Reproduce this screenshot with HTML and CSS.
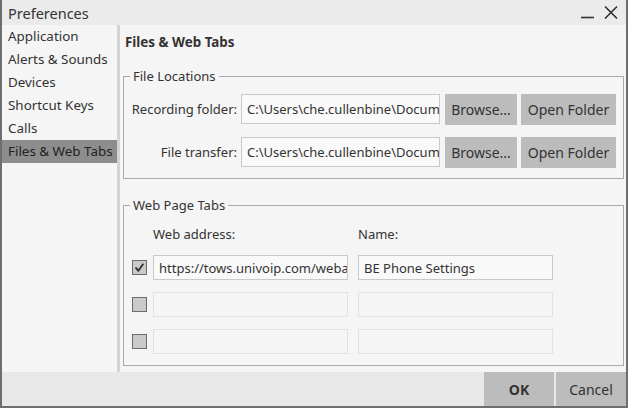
FILE: index.html
```html
<!DOCTYPE html>
<html lang="en">

<head>
  <meta charset="UTF-8" />
  <title>Preferences</title>
  <link rel="stylesheet" href="styles.css">
</head>

<body>
  <div class="window">
    <div class="titlebar">
      <span class="title">Preferences</span>
      <span class="controls">
        <svg class="ctl" width="16" height="16" viewBox="0 0 16 16"><path d="M1 12.5h13" stroke="#333" stroke-width="1.6" /></svg>
        <svg class="ctl" width="16" height="16" viewBox="0 0 16 16"><path d="M2 1.5l12 12M14 1.5l-12 12" stroke="#333" stroke-width="1.7" /></svg>
      </span>
    </div>

    <div class="body">
      <ul class="sidebar">
        <li>Application</li>
        <li>Alerts &amp; Sounds</li>
        <li>Devices</li>
        <li>Shortcut Keys</li>
        <li>Calls</li>
        <li class="active">Files &amp; Web Tabs</li>
      </ul>

      <div class="main">
        <h3>Files &amp; Web Tabs</h3>

        <fieldset class="files">
          <legend>File Locations</legend>
          <div class="file-row">
            <label>Recording folder:</label>
            <input type="text" class="field" value="C:\Users\che.cullenbine\Documents\Recordings">
            <button class="btn browse">Browse...</button>
            <button class="btn open">Open Folder</button>
          </div>
          <div class="file-row">
            <label>File transfer:</label>
            <input type="text" class="field" value="C:\Users\che.cullenbine\Documents\Transfers">
            <button class="btn browse">Browse...</button>
            <button class="btn open">Open Folder</button>
          </div>
        </fieldset>

        <fieldset class="tabs">
          <legend>Web Page Tabs</legend>
          <div class="tab-head">
            <span class="col-url">Web address:</span>
            <span class="col-name">Name:</span>
          </div>
          <div class="tab-row">
            <span class="check checked">
              <svg width="13" height="13" viewBox="0 0 13 13"><path d="M2.5 6.5l2.8 3.2 5-7" fill="none" stroke="#2e2e2e" stroke-width="1.8" /></svg>
            </span>
            <input type="text" class="field url" value="https://tows.univoip.com/webadmin/phone">
            <input type="text" class="field name" value="BE Phone Settings">
          </div>
          <div class="tab-row">
            <span class="check"></span>
            <input type="text" class="field url empty" disabled>
            <input type="text" class="field name empty" disabled>
          </div>
          <div class="tab-row">
            <span class="check"></span>
            <input type="text" class="field url empty" disabled>
            <input type="text" class="field name empty" disabled>
          </div>
        </fieldset>
      </div>
    </div>

    <div class="footer">
      <button class="btn ok">OK</button>
      <button class="btn cancel">Cancel</button>
    </div>
  </div>
</body>

</html>
```

FILE: styles.css
```css
body {
  margin: 0;
  background: #fff;
  font-family: 'Noto Sans', 'Open Sans', sans-serif;
  font-size: 13px;
  color: #333;
}

.window {
  width: 628px;
  height: 408px;
  box-sizing: border-box;
  border: 2px solid #6e6e6e;
  border-top: none;
  background: #f5f5f5;
  display: flex;
  flex-direction: column;
}

.titlebar {
  height: 25px;
  background: #ebebeb;
  display: flex;
  align-items: center;
  justify-content: space-between;
  padding: 0 7px 0 6px;
}

.title {
  font-size: 14.5px;
  color: #333;
}

.controls {
  display: flex;
  gap: 7px;
  margin-top: 1px;
}

.body {
  flex: 1;
  display: flex;
}

.sidebar {
  list-style: none;
  margin: 0;
  padding: 0;
  width: 115px;
  border-right: 3px solid #d3d3d3;
}

.sidebar li {
  height: 23px;
  line-height: 23px;
  padding-left: 6px;
  font-size: 13.4px;
  white-space: nowrap;
}

.sidebar li.active {
  background: #8d8d8d;
  color: #222;
}

.main {
  flex: 1;
  padding: 0 2px 0 3px;
}

h3 {
  margin: 9px 0 16px 2px;
  font-size: 13.4px;
  line-height: 17px;
  font-weight: 700;
}

fieldset {
  margin: 0;
  border: 1px solid #a9a9a9;
  padding: 0;
}

legend {
  line-height: 18px;
  padding: 0 3px;
  margin-left: 6px;
}

.files {
  padding: 9px 0 11px 0;
}

.file-row {
  display: flex;
  align-items: center;
  height: 30px;
}

.file-row + .file-row {
  margin-top: 13px;
}

.file-row label {
  width: 113px;
  text-align: right;
  margin-right: 4px;
}

.field {
  box-sizing: border-box;
  font: inherit;
  color: #333;
  background: #f9f9f9;
  border: 1px solid #c9c9c9;
  padding: 0 0 0 5px;
  margin: 0;
  outline: none;
}

.file-row .field {
  width: 199px;
  height: 30px;
}

.btn {
  font: inherit;
  font-size: 14px;
  color: #333;
  background: #bcbcbc;
  border: none;
  padding: 0;
  margin: 0;
}

.file-row .btn {
  height: 31px;
}

.browse {
  width: 72px;
  margin-left: 5px;
}

.open {
  width: 95px;
  margin-left: 4px;
}

.tabs {
  margin-top: 17px;
  padding: 11px 0 11px 8px;
}

.tabs legend {
  margin-left: -2px;
}

.tab-head {
  display: flex;
  line-height: 18px;
  margin-bottom: 12px;
}

.col-url {
  margin-left: 21px;
  width: 205px;
}

.tab-row {
  display: flex;
  align-items: center;
  height: 25px;
}

.tab-row + .tab-row {
  margin-top: 12px;
}

.check {
  width: 15px;
  height: 15px;
  box-sizing: border-box;
  border: 1px solid #6c6c6c;
  background: #cacaca;
  margin-right: 6px;
  display: flex;
  align-items: center;
  justify-content: center;
}

.tab-row .field {
  width: 195px;
  height: 25px;
}

.tab-row .name {
  margin-left: 10px;
}

.field.empty {
  background: #f5f5f5;
  border-color: #e1e1e1;
}

.footer {
  height: 34px;
  background: #e8e8e8;
  display: flex;
  justify-content: flex-end;
  gap: 2px;
}

.footer .btn {
  height: 34px;
  width: 70px;
  font-size: 14px;
}

.ok {
  font-weight: 700;
}

.cancel {
  width: 68px;
}
```
